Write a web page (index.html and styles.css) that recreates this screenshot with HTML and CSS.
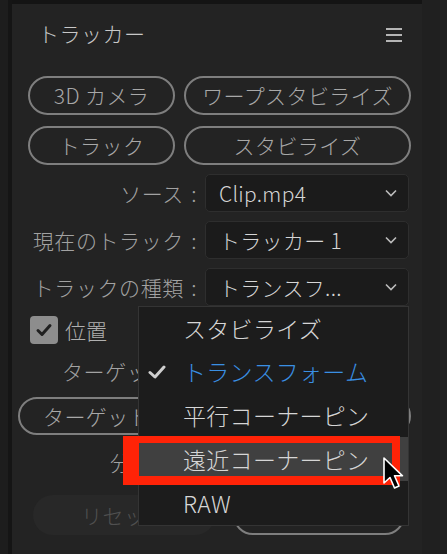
FILE: index.html
```html
<!DOCTYPE html>
<html>

<head>
  <meta charset="utf-8">
  <link rel="stylesheet" href="styles.css">
</head>

<body>

  <div class="app">
    <div class="edge"></div>

    <div class="panel">
      <div class="topbar"></div>

      <div class="head">
        <span class="title">トラッカー</span>
        <span class="burger"><i></i><i></i><i></i></span>
      </div>

      <div class="modes">
        <button class="pill">3D カメラ</button>
        <button class="pill">ワープスタビライズ</button>
        <button class="pill">トラック</button>
        <button class="pill">スタビライズ</button>
      </div>

      <div class="field">
        <label>ソース :</label>
        <div class="select">
          <span>Clip.mp4</span>
          <svg class="chev" width="12" height="8" viewBox="0 0 12 8"><polyline points="1,1.5 6,6.5 11,1.5" /></svg>
        </div>
      </div>
      <div class="field">
        <label>現在のトラック :</label>
        <div class="select">
          <span>トラッカー 1</span>
          <svg class="chev" width="12" height="8" viewBox="0 0 12 8"><polyline points="1,1.5 6,6.5 11,1.5" /></svg>
        </div>
      </div>
      <div class="field">
        <label>トラックの種類 :</label>
        <div class="select">
          <span>トランスフ...</span>
          <svg class="chev" width="12" height="8" viewBox="0 0 12 8"><polyline points="1,1.5 6,6.5 11,1.5" /></svg>
        </div>
      </div>

      <div class="check-row">
        <span class="box">
          <svg width="18" height="18" viewBox="0 0 18 18"><polyline points="3,9.5 7,13.5 15,4.5" /></svg>
        </span>
        <span>位置</span>
      </div>

      <div class="line-label target">ターゲット :</div>

      <div class="pair target-btns">
        <button class="pill">ターゲット</button>
        <button class="pill"></button>
      </div>

      <div class="line-label analyze">分析 :</div>

      <div class="pair bottom-btns">
        <button class="pill off">リセット</button>
        <button class="pill"></button>
      </div>
    </div>

    <div class="side"></div>

    <!-- open dropdown of トラックの種類 -->
    <ul class="popup">
      <li>スタビライズ</li>
      <li class="current">
        <svg class="tick" width="18" height="16" viewBox="0 0 18 16"><polyline points="2,8.5 7,13 16,3" /></svg>
        トランスフォーム
      </li>
      <li>平行コーナーピン</li>
      <li class="hover">遠近コーナーピン</li>
      <li>RAW</li>
    </ul>

    <div class="callout"></div>

    <svg class="cursor" width="26" height="38" viewBox="0 0 26 38">
      <path d="M3 2 L3 27 L9 21.5 L13.5 32 L18 30 L13.5 19.8 L21.5 19.8 Z" />
    </svg>
  </div>

</body>

</html>
```

FILE: styles.css
```css
html,
body {
  margin: 0;
  height: 100%;
}

body {
  background: #202020;
  font-family: "Noto Sans CJK JP", "Noto Sans", sans-serif;
  font-weight: 300;
  overflow: hidden;
}

.app {
  position: relative;
  display: flex;
  width: 447px;
  height: 554px;
}

.edge {
  width: 8px;
  background: #1d1d1d;
  border-right: 4px solid #151515;
}

.side {
  flex: 1;
  background: #202020;
}

.panel {
  width: 410px;
  background: #232323;
  padding: 0 11px 0 16px;
  box-sizing: border-box;
}

.topbar {
  height: 4px;
  margin: 0 -11px 0 -16px;
  background: #141414;
}

.head {
  display: flex;
  align-items: center;
  justify-content: space-between;
  height: 58px;
  padding: 0 9px 0 10px;
}

.title {
  font-size: 21px;
  letter-spacing: 0.5px;
  color: #c8c8c8;
}

.burger {
  display: flex;
  flex-direction: column;
  gap: 4px;
  width: 16px;
  margin-top: 3px;
}

.burger i {
  display: block;
  height: 2px;
  background: #b5b5b5;
}

.pill {
  height: 39px;
  padding: 0;
  border: 2px solid #7e7e7e;
  border-radius: 20px;
  background: transparent;
  color: #a8a8a8;
  font-family: inherit;
  font-weight: inherit;
  font-size: 21px;
  letter-spacing: 0.4px;
  line-height: 1;
  white-space: nowrap;
}

.modes {
  display: grid;
  grid-template-columns: 147px 227px;
  grid-auto-rows: 39px;
  column-gap: 9px;
  row-gap: 11px;
  margin-top: 14px;
}

.field {
  display: flex;
  align-items: center;
  gap: 8px;
  height: 38px;
  margin-top: 9px;
  margin-right: 2px;
}

.field label {
  flex: 1;
  text-align: right;
  font-size: 21px;
  letter-spacing: 0.6px;
  word-spacing: 2px;
  color: #a2a2a2;
  white-space: nowrap;
}

.select {
  display: flex;
  align-items: center;
  justify-content: space-between;
  width: 204px;
  height: 38px;
  box-sizing: border-box;
  padding: 0 11px 0 13px;
  border: 1px solid #2e2e2e;
  border-radius: 5px;
  background: #1b1b1b;
  color: #d6d6d6;
  font-size: 21px;
  letter-spacing: 0.3px;
}

.chev polyline {
  fill: none;
  stroke: #bcbcbc;
  stroke-width: 1.6;
}

.check-row {
  display: flex;
  align-items: center;
  gap: 7px;
  height: 28px;
  margin: 10px 0 0 2px;
  font-size: 21px;
  color: #b0b0b0;
}

.box {
  display: flex;
  align-items: center;
  justify-content: center;
  width: 28px;
  height: 28px;
  border-radius: 4px;
  background: #8d8d8d;
}

.box polyline {
  fill: none;
  stroke: #202020;
  stroke-width: 3;
  stroke-linecap: round;
  stroke-linejoin: round;
}

.line-label {
  display: flex;
  align-items: center;
  height: 28px;
  font-size: 21px;
  letter-spacing: 0.6px;
  color: #a2a2a2;
}

.target {
  margin-top: 13px;
  padding-left: 34px;
}

.analyze {
  margin-top: 13px;
  padding-left: 82px;
}

.pair {
  display: flex;
}

.target-btns {
  gap: 9px;
  margin: 12px 0 0 -10px;
}

.target-btns .pill {
  height: 38px;
  text-align: left;
  padding-left: 23px;
}

.target-btns .pill:first-child {
  width: 202px;
}

.target-btns .pill:last-child {
  width: 184px;
}

.bottom-btns {
  gap: 18px;
  margin: 19px 0 0 5px;
}

.bottom-btns .pill {
  height: 40px;
}

.bottom-btns .pill:first-child {
  width: 182px;
}

.bottom-btns .pill:last-child {
  width: 172px;
}

.pill.off {
  border-color: transparent;
  background: #282828;
  color: #505050;
}

.popup {
  position: absolute;
  left: 138px;
  top: 306px;
  width: 271px;
  margin: 0;
  padding: 0;
  list-style: none;
  box-sizing: border-box;
  border: 1px solid #343434;
  background: #1c1c1c;
}

.popup li {
  position: relative;
  display: flex;
  align-items: center;
  height: 44px;
  padding-left: 44px;
  font-size: 23px;
  letter-spacing: 0.3px;
  color: #d6d6d6;
}

.popup li:first-child {
  height: 42px;
}

.popup .current {
  color: #3a8fe3;
}

.popup .hover {
  background: #404040;
}

.tick {
  position: absolute;
  left: 9px;
  top: 15px;
}

.tick polyline {
  fill: none;
  stroke: #cfcfcf;
  stroke-width: 3;
  stroke-linecap: round;
  stroke-linejoin: round;
}

.callout {
  position: absolute;
  left: 123px;
  top: 436px;
  width: 277px;
  height: 49px;
  box-sizing: border-box;
  border-style: solid;
  border-color: #ff2307;
  border-width: 7px 8px 9px 16px;
}

.cursor {
  position: absolute;
  left: 381px;
  top: 456px;
}

.cursor path {
  fill: #000;
  stroke: #fff;
  stroke-width: 1.6;
  stroke-linejoin: round;
}
```
